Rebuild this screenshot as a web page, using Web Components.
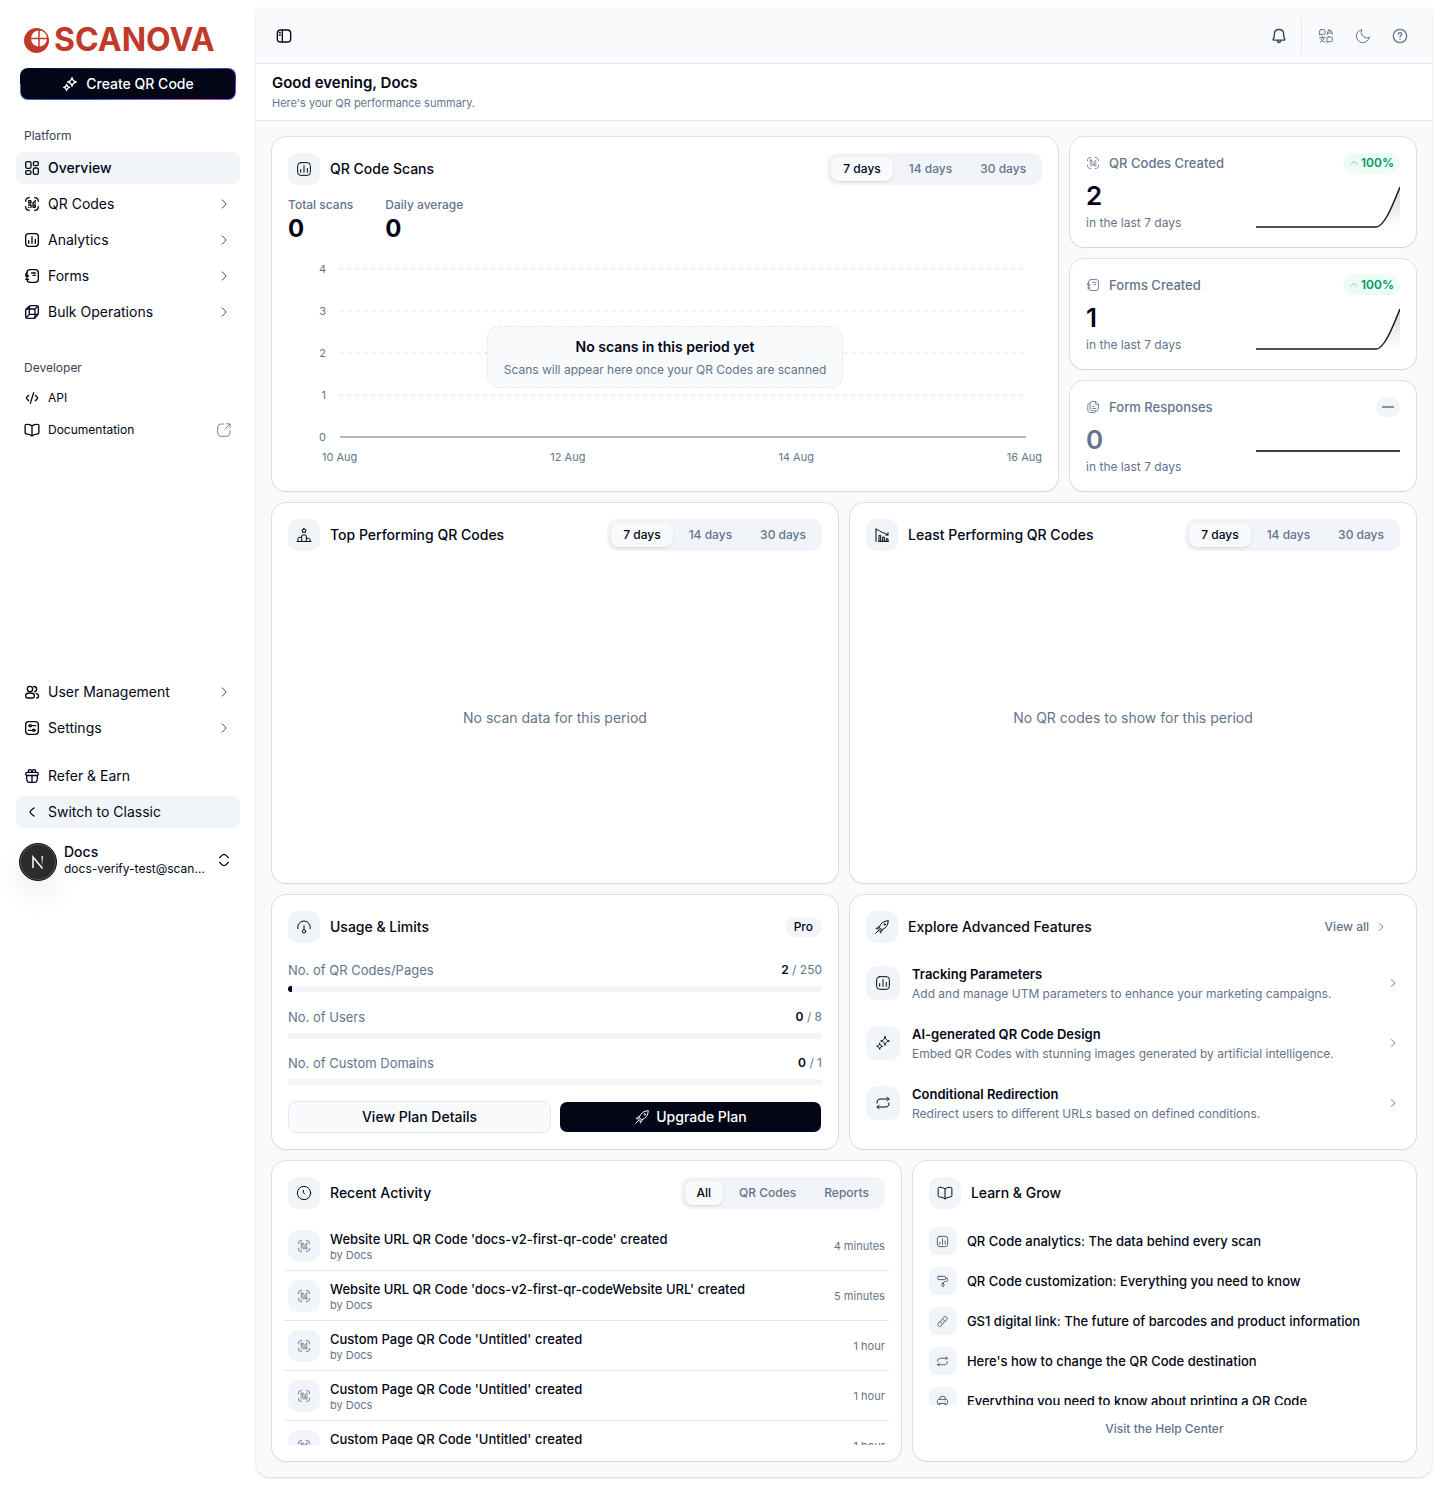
<!DOCTYPE html>
<html lang="en">
<head>
<meta charset="utf-8">
<meta name="viewport" content="width=device-width, initial-scale=1">
<title>Scanova – Overview</title>
<style>
  :root {
    --ink: #020617;
    --muted: #64748b;
    --soft: #f1f5f9;
    --surface: #f8fafc;
    --line: #e2e8f0;
  }
  body {
    margin: 0;
    background: #fff;
    color: var(--ink);
    font: 14px/20px Inter, "Liberation Sans", sans-serif;
  }
</style>
</head>
<body>
<app-shell>
  <app-sidebar slot="sidebar"></app-sidebar>
  <top-bar></top-bar>
  <page-greeting heading="Good evening, Docs">Here's your QR performance summary.</page-greeting>
  <dash-grid>
    <dash-row layout="wide">
      <dash-card icon="chart" heading="QR Code Scans" style="--body-gap:12px">
        <seg-tabs slot="action" options="7 days,14 days,30 days"></seg-tabs>
        <scan-chart></scan-chart>
      </dash-card>
      <stat-stack>
        <stat-card icon="qr" label="QR Codes Created" value="2" delta="100%"></stat-card>
        <stat-card icon="forms" label="Forms Created" value="1" delta="100%"></stat-card>
        <stat-card icon="files" label="Form Responses" value="0"></stat-card>
      </stat-stack>
    </dash-row>
    <dash-row layout="half">
      <dash-card icon="podium" heading="Top Performing QR Codes">
        <seg-tabs slot="action" options="7 days,14 days,30 days"></seg-tabs>
        <empty-note>No scan data for this period</empty-note>
      </dash-card>
      <dash-card icon="decline" heading="Least Performing QR Codes">
        <seg-tabs slot="action" options="7 days,14 days,30 days"></seg-tabs>
        <empty-note>No QR codes to show for this period</empty-note>
      </dash-card>
    </dash-row>
    <dash-row layout="half">
      <dash-card icon="gauge" heading="Usage &amp; Limits">
        <plan-badge slot="action">Pro</plan-badge>
        <usage-panel>
          <usage-row label="No. of QR Codes/Pages" used="2" limit="250"></usage-row>
          <usage-row label="No. of Users" used="0" limit="8"></usage-row>
          <usage-row label="No. of Custom Domains" used="0" limit="1"></usage-row>
        </usage-panel>
      </dash-card>
      <dash-card icon="rocket" heading="Explore Advanced Features" style="--body-gap:10px">
        <view-all slot="action">View all</view-all>
        <feature-item icon="chart" heading="Tracking Parameters">Add and manage UTM parameters to enhance your marketing campaigns.</feature-item>
        <feature-item icon="sparkles" heading="AI-generated QR Code Design">Embed QR Codes with stunning images generated by artificial intelligence.</feature-item>
        <feature-item icon="repeat" heading="Conditional Redirection">Redirect users to different URLs based on defined conditions.</feature-item>
      </dash-card>
    </dash-row>
    <dash-row layout="feed">
      <dash-card icon="clock" heading="Recent Activity" style="--body-gap:12px">
        <seg-tabs slot="action" options="All,QR Codes,Reports"></seg-tabs>
        <clip-list style="--list-height:224px; --bleed:4px">
          <activity-item by="by Docs" when="4 minutes">Website URL QR Code 'docs-v2-first-qr-code' created</activity-item>
          <activity-item by="by Docs" when="5 minutes">Website URL QR Code 'docs-v2-first-qr-codeWebsite URL' created</activity-item>
          <activity-item by="by Docs" when="1 hour">Custom Page QR Code 'Untitled' created</activity-item>
          <activity-item by="by Docs" when="1 hour">Custom Page QR Code 'Untitled' created</activity-item>
          <activity-item by="by Docs" when="1 hour">Custom Page QR Code 'Untitled' created</activity-item>
        </clip-list>
      </dash-card>
      <dash-card icon="book" heading="Learn &amp; Grow" style="--body-gap:12px">
        <clip-list style="--list-height:184px">
          <learn-item icon="chart">QR Code analytics: The data behind every scan</learn-item>
          <learn-item icon="roller">QR Code customization: Everything you need to know</learn-item>
          <learn-item icon="link">GS1 digital link: The future of barcodes and product information</learn-item>
          <learn-item icon="repeat">Here's how to change the QR Code destination</learn-item>
          <learn-item icon="printer">Everything you need to know about printing a QR Code</learn-item>
        </clip-list>
        <help-link>Visit the Help Center</help-link>
      </dash-card>
    </dash-row>
  </dash-grid>
</app-shell>

<script>
const ICONS = {
  grid: '<rect x="2.5" y="2.5" width="8" height="10" rx="2.5"/><rect x="14" y="2.5" width="7.500" height="6" rx="2.500"/><rect x="2.500" y="16" width="8" height="5.500" rx="2.500"/><rect x="14" y="12" width="7.500" height="9.500" rx="2.500"/>',
  qr: '<path d="M2.5 8C2.5 4.500 4 2.600 8 2.500M16 2.500c4 .1 5.500 2 5.500 5.500M21.500 16c0 3.500-1.500 5.400-5.500 5.500M8 21.500C4 21.400 2.500 19.500 2.500 16"/><rect x="7" y="7" width="3.500" height="3.500" rx=".8"/><rect x="13.500" y="13.500" width="3.500" height="3.500" rx=".8"/><path d="M17.300 6.800L13.500 10.500v1.500M16.800 10.500h.5M6.800 13.500h3.700v3.700M7 17.200h.4"/>',
  chart: '<rect x="2.500" y="2.500" width="19" height="19" rx="4.500"/><path d="M7 17v-4M12 17V7M17 17v-6"/>',
  forms: '<rect x="4.500" y="2.500" width="17" height="19" rx="4.500"/><path d="M4.500 7.500L2.500 9.500M2.500 12H7M4.500 12l-2-2.500M2.500 17H7M11.500 7.500H17M13.500 11H17"/>',
  cube: '<path d="M2.500 10c0-1.500.6-2.500 1.600-3.300l3.500-3C8.500 3 9.300 2.500 10.700 2.500H18c2.500 0 3.500 1 3.500 3.500v7.300c0 1.400-.4 2.200-1.200 3.100l-3 3.500c-.8 1-1.800 1.600-3.300 1.600H6c-2.500 0-3.500-1-3.500-3.500z"/><path d="M3.500 7.500H14c1.800 0 2.500.7 2.500 2.500v10.500M16 8l5-4.800M8 3.500v12L3.300 20.500M8 15.500h12.500"/>',
  code: '<path d="M17 8l1.800 1.800c1 .9 1.500 1.500 1.500 2.200s-.5 1.300-1.500 2.200L17 16M7 8L5.200 9.800C4.200 10.700 3.700 11.300 3.700 12s.5 1.300 1.500 2.200L7 16M14.500 4l-5 16"/>',
  book: '<path d="M12 5.500v15.500M5.300 3.600C8.500 4 10.800 4.800 12 5.800c1.200-1 3.500-1.800 6.700-2.200 1.600-.2 2.400-.3 3 .3.600.5.600 1.300.6 3v7.600c0 1.500 0 2.300-.4 2.800-.4.500-1.300.6-3 .9-3.100.4-5.300 1.300-6.900 2.800-1.600-1.500-3.800-2.400-6.900-2.800-1.700-.3-2.600-.4-3-.9-.4-.5-.4-1.300-.4-2.800V6.900c0-1.700 0-2.500.6-3 .600-.6 1.400-.5 3-.3z"/>',
  external: '<path d="M11 3H8.500C4.500 3 2.500 5 2.500 9v6.500c0 4 2 6 6 6H15c4 0 6-2 6-6V13M21 3.300L13.500 10.500M15.500 2.800c3 0 5-.2 5.500.3.500.5.300 2.500.2 5.400"/>',
  users: '<circle cx="9" cy="7.500" r="4"/><path d="M2.500 17.500c0-3 2-4 6.500-4s6.500 1 6.500 4-1 3.500-3 3.500h-7c-2 0-3-.5-3-3.500zM14.500 3.700c3 0 4.500 1.500 4.500 3.800 0 2.200-1.500 3.700-3.300 4M18 14c2.500.5 3.800 1.700 3.800 4 0 2-.8 3-2.800 3"/>',
  settings: '<rect x="2.500" y="2.500" width="19" height="19" rx="4.500"/><path d="M7 8.500h1M12 8.500h5.500M6.500 15.500H12M16.500 15.500h1"/><circle cx="9.500" cy="8.500" r="1.600"/><circle cx="14.500" cy="15.500" r="1.600"/>',
  gift: '<path d="M4 11v4c0 3.500.5 6.500 4 6.500h8c3.500 0 4-3 4-6.500v-4M2.500 9c0-1.500.7-2.500 2.500-2.500h14c1.800 0 2.500 1 2.500 2.500s-.7 2.300-2.500 2.300H5C3.200 11.300 2.500 10.500 2.500 9zM12 11v10.500M6.500 4.500c0-1.300 1-2 2-2 2 0 3.500 2 3.500 4 0-2 1.500-4 3.500-4 1 0 2 .7 2 2 0 1-.5 1.700-1 2M6.500 4.500c0 1 .5 1.700 1 2"/>',
  chevron: '<path d="M9 6s6 4.400 6 6-6 6-6 6"/>',
  back: '<path d="M15 6s-6 4.400-6 6 6 6 6 6"/>',
  up: '<path d="M4 15s6-6 8-6 8 6 8 6"/>',
  unfold: '<path d="M5.500 8.500s4.500-5 6.500-5 6.500 5 6.500 5M5.500 15.500s4.500 5 6.500 5 6.500-5 6.500-5"/>',
  panel: '<rect x="2" y="3" width="20" height="18" rx="5"/><path d="M9.500 3v18M5 7h1.500M5 10.500h1.500"/>',
  bell: '<path d="M4 18.200c-1-.3-1.200-1.200-.5-2C4.800 14.700 5 13.500 5 11V9.500C5 5 8 2.200 12 2.200S19 5 19 9.500V11c0 2.500.2 3.700 1.500 5.200.7.800.5 1.700-.5 2zM9.500 18.500c0 2 1 3.200 2.500 3.200s2.500-1.200 2.500-3.200"/>',
  translate: '<path d="M4.500 2.500h4c1.500 0 2 .5 2 2v3c0 1.500-.5 2-2 2H6l-3.500 1v-6c0-1.500.5-2 2-2zM2.500 14.500h8M6.500 12.500v2M9 14.500c-.5 3-2.500 5-5.500 6.500M4.500 17c1 2 3 3.500 6 4M13.500 10l2.500-7.500h1l2.500 3M14.500 7.500h4M17.500 4c2.500 0 4 1.500 4 4.500M19.500 7l2 1.700M15.500 13.500h4c1.500 0 2 .5 2 2v3c0 1.500-.5 2-2 2h-3l-3 1v-6c0-1.500.5-2 2-2z"/>',
  moon: '<path d="M21.500 14.100c-1.200.6-2.500.9-3.900.9A9.400 9.400 0 0 1 9.900 2.500 9.800 9.800 0 1 0 21.500 14.100z"/>',
  help: '<circle cx="12" cy="12" r="10"/><path d="M9.500 9.500C9.500 8 10.600 7 12 7s2.500 1 2.500 2.300c0 1.700-2.500 2-2.500 4.200M12 17v.1"/>',
  sparkles: '<path d="M15 2.500c.7 4 2.500 5.800 6.500 6.500-4 .7-5.800 2.500-6.500 6.500-.7-4-2.500-5.800-6.500-6.500 4-.7 5.800-2.500 6.500-6.500zM7 12.500c.5 3 1.700 4 4.500 4.500-2.800.5-4 1.700-4.500 4.500-.5-2.800-1.700-4-4.500-4.500 2.800-.5 4-1.500 4.500-4.500z"/>',
  files: '<path d="M7 6c0-2.500 1-3.500 3.500-3.500h4.700c1 0 1.500.2 2.200.9l3 3c.7.700.9 1.200.9 2.200V15c0 2.500-1 3.500-3.500 3.500h-7.300C8 18.500 7 17.500 7 15zM16 2.800V6c0 1.500.5 2 2 2h3M7 5.500C4 5.500 3 7 3 9.500v7c0 3.500 1.500 5 5 5h5.500c2.500 0 3.500-1 3.500-3M11 11h3M11 14.500h6"/>',
  podium: '<path d="M12 2l1.200 2 2.300.5-1.600 1.700.3 2.300-2.200-1-2.200 1 .3-2.300-1.600-1.700 2.300-.5zM8.500 21.500v-8c0-1 .5-1.500 1.500-1.500h4c1 0 1.500.5 1.500 1.500v8M8.500 15.500H5c-1.500 0-2 .5-2 2v4M15.500 17H19c1.500 0 2 .5 2 2v2.500M1.500 21.700h21"/>',
  decline: '<path d="M3 2.500v19M7.500 21.500v-9h2.500v9M13 21.500v-6.500h2.500v6.500M18.500 21.500v-4H21v4M7 21.500h14.500M4 4c4 0 5.500 3.500 9 4.500s4.500.5 8 3.500M21 8.500V12h-3.500"/>',
  gauge: '<path d="M2.700 14.500A9.500 9.500 0 0 1 12 3a9.500 9.500 0 0 1 9.300 11.500"/><path d="M12 10v6"/><circle cx="12" cy="18.500" r="2.500"/>',
  rocket: '<path d="M8 12c2-5.500 6-9 13.500-9.500C21 10 17.500 14 12 16zM8 12c-1.500-.5-3 0-5 2.500L8 15M12 16c.5 1.500 0 3-2.500 5L9 16.500M7 17l-4.500 4.500"/><circle cx="16" cy="8" r="1"/>',
  repeat: '<path d="M3 12c0-4.500 1.500-6 6-6h12M18 3.500c1.500 1 3 2 3 2.500s-1.500 1.500-3 2.500M21 12c0 4.500-1.500 6-6 6H3M6 15.500c-1.500 1-3 2-3 2.500s1.500 1.500 3 2.500"/>',
  clock: '<circle cx="12" cy="12" r="10"/><path d="M11 8v3.500l2 2"/>',
  roller: '<rect x="3" y="2.500" width="15" height="6" rx="2"/><path d="M18 5.500c3 0 3.500.5 3.500 3s-.5 3-4 3.500c-3 .4-4.500.8-4.500 3M11.800 15.500h2.400l.5 4c.1 1.200-.5 2-1.700 2s-1.800-.8-1.700-2z"/>',
  link: '<path d="M14 8.500c2 1.500 1.500 4 .2 5.500l-4 5.500c-1.300 1.800-3.500 2.300-5.200 1-1.700-1.200-1.900-3.500-.6-5.300l2.600-3.500M10 15.500c-2-1.500-1.500-4-.2-5.500l4-5.500c1.300-1.800 3.500-2.300 5.200-1 1.700 1.200 1.900 3.500.6 5.300L17 12.300"/>',
  printer: '<path d="M7 17.500c-3.500 0-4.500-1-4.500-5S3.500 8 7 8h10c3.500 0 4.500.5 4.500 4.500s-1 5-4.500 5M6.500 8C6.500 4 7.500 2.500 12 2.500S17.500 4 17.500 8M7 15.500h10l.7 3.500c.3 1.800-.3 2.500-2.200 2.500h-7c-1.900 0-2.500-.7-2.200-2.500zM17 11.500h.1"/>'
};

const BASE = ':host,*{box-sizing:border-box}button{font:inherit;color:inherit;border:0;background:none;padding:0;margin:0}a{color:inherit;text-decoration:none}';

/* Registers an element whose shadow root is filled from a style sheet and a render function. */
function component(name, css, render) {
  customElements.define(name, class extends HTMLElement {
    constructor() { super(); this.attachShadow({ mode: 'open' }); }
    connectedCallback() {
      const get = (key, fallback = '') => this.getAttribute(key) ?? fallback;
      const has = key => this.hasAttribute(key);
      const template = document.createElement('template');
      template.innerHTML = `<style>${BASE}${css}</style>${render(get, has)}`;
      this.shadowRoot.replaceChildren(template.content.cloneNode(true));
    }
  });
}

component('ui-icon', ':host{display:inline-flex;flex:none}svg{display:block}', get => `
  <svg width="${get('size', 16)}" height="${get('size', 16)}" viewBox="0 0 24 24" fill="none" stroke="currentColor"
    stroke-width="${get('weight', '1.5')}" stroke-linecap="round" stroke-linejoin="round" aria-hidden="true">${ICONS[get('name')] || ''}</svg>`);

component('app-shell', `
  :host{display:flex;align-items:flex-start}
  main{flex:1;min-width:0;margin:8px 8px 8px 0;background:var(--surface);border-radius:0 0 14px 14px;
    box-shadow:0 1px 3px rgba(2,6,23,.12),0 1px 2px rgba(2,6,23,.06)}
  ::slotted(app-sidebar){flex:none}`, () => '<slot name="sidebar"></slot><main><slot></slot></main>');

component('brand-logo', `
  :host{display:flex;align-items:center;gap:5px;color:#c0392b;font:700 32px/32px Inter,"Liberation Sans",sans-serif}
  svg{display:block}`, () => `
  <svg width="25" height="25" viewBox="0 0 25 25" aria-hidden="true">
    <circle cx="12.500" cy="12.500" r="12.500" fill="currentColor"/><circle cx="15" cy="10.500" r="8" fill="#fff"/>
    <path d="M15 2v17M6.500 10.500h17" stroke="currentColor" stroke-width="1.500"/></svg><span>SCANOVA</span>`);

component('nav-item', `
  :host{display:block}
  a{display:flex;align-items:center;gap:8px;height:32px;padding:0 8px;border-radius:8px}
  :host([active]) a{background:var(--soft)}
  :host([current]) a{font-weight:500}
  :host([small]) a{height:28px;font-size:12px}
  span{flex:1}
  .tail{color:#334155}`, (get, has) => `
  <a href="#"><ui-icon name="${get('icon')}" weight="2"></ui-icon><span><slot></slot></span>
  ${has('more') ? '<ui-icon class="tail" name="chevron"></ui-icon>' : ''}
  ${has('external') ? '<ui-icon class="tail" name="external" weight="1"></ui-icon>' : ''}</a>`);

component('nav-group', `
  :host{display:flex;flex-direction:column;gap:4px;padding:8px 16px}
  h2{margin:0 8px -4px;font:400 12px/32px Inter,sans-serif;color:#3b4054}`, get => `
  ${get('label') ? `<h2>${get('label')}</h2>` : ''}<slot></slot>`);

component('create-button', `
  :host{display:block;padding:0 20px}
  button{display:flex;width:100%;height:32px;align-items:center;justify-content:center;gap:8px;color:#fff;font-weight:500;
    border:1px solid transparent;border-radius:8px;
    background:linear-gradient(#020617,#020617) padding-box,
      linear-gradient(90deg,#3b6ea8 0,#3b5ea8 30%,#7c6fd6 60%,#d0489a 85%,#7c3aed 100%) 0 100%/100% 16px no-repeat border-box,
      linear-gradient(90deg,#020617 0,#1e3a5f 40%,#3b6ea8 80%,#5b21b6 100%) border-box}`,
  () => '<button type="button"><ui-icon name="sparkles" weight="2"></ui-icon>Create QR Code</button>');

component('user-chip', `
  :host{display:block;padding:0 16px}
  button{display:flex;width:100%;height:48px;align-items:center;gap:8px;padding:0 8px 0 3px;text-align:left}
  .avatar{display:grid;place-items:center;width:38px;height:38px;border-radius:50%;background:#2b2b2b;
    border:1px solid #111;box-shadow:inset 0 0 0 1px #555,0 16px 32px -8px rgba(0,0,0,.2);margin:4px -1px 0 0}
  .who{flex:1;min-width:0}
  .who b,.who small{display:block;overflow:hidden;text-overflow:ellipsis;white-space:nowrap}
  .who b{font:500 14px/17px Inter,sans-serif}
  .who small{font:400 12px/17px Inter,sans-serif}`, () => `
  <button type="button"><span class="avatar"><svg width="14" height="14" viewBox="0 0 14 14" fill="none" aria-hidden="true">
    <defs><linearGradient id="fade" x1="0" y1="0" x2="0" y2="1"><stop stop-color="#fff"/><stop offset="1" stop-color="#fff" stop-opacity="0"/></linearGradient></defs>
    <path d="M2 13V2l9.500 11.500" stroke="#fff" stroke-width="1.500"/><rect x="10.500" y="1" width="1.500" height="10" fill="url(#fade)"/></svg></span>
  <span class="who"><b>Docs</b><small>docs-verify-test@scanova.io</small></span><ui-icon name="unfold" weight="2"></ui-icon></button>`);

component('app-sidebar', `
  :host{display:flex;flex-direction:column;width:256px;height:100vh;max-height:892px;padding-bottom:8px}
  brand-logo{padding:24px 24px 12px}
  create-button{margin-bottom:12px}
  .low{margin-top:auto}`, () => `
  <brand-logo></brand-logo>
  <create-button></create-button>
  <nav-group label="Platform">
    <nav-item icon="grid" active current>Overview</nav-item>
    <nav-item icon="qr" more>QR Codes</nav-item>
    <nav-item icon="chart" more>Analytics</nav-item>
    <nav-item icon="forms" more>Forms</nav-item>
    <nav-item icon="cube" more>Bulk Operations</nav-item>
  </nav-group>
  <nav-group label="Developer" style="padding-top:16px">
    <nav-item icon="code" small>API</nav-item>
    <nav-item icon="book" small external>Documentation</nav-item>
  </nav-group>
  <nav-group class="low">
    <nav-item icon="users" more>User Management</nav-item>
    <nav-item icon="settings" more>Settings</nav-item>
  </nav-group>
  <nav-group>
    <nav-item icon="gift">Refer &amp; Earn</nav-item>
    <nav-item icon="back" active>Switch to Classic</nav-item>
  </nav-group>
  <user-chip></user-chip>`);

component('top-bar', `
  :host{display:flex;align-items:center;height:56px;padding:0 24px 0 20px;border-bottom:1px solid var(--line);color:var(--muted)}
  button{display:flex}
  .toggle{color:var(--ink);margin-right:auto}
  .bell{color:#334155}
  hr{width:1px;height:38px;margin:0 16px 0 14px;border:0;background:var(--line)}
  .trio{display:flex;gap:21px}`, () => `
  <button class="toggle" type="button" aria-label="Toggle sidebar"><ui-icon name="panel" weight="2"></ui-icon></button>
  <button class="bell" type="button" aria-label="Notifications"><ui-icon name="bell" weight="2"></ui-icon></button>
  <hr>
  <div class="trio">
    <button type="button" aria-label="Language"><ui-icon name="translate"></ui-icon></button>
    <button type="button" aria-label="Theme"><ui-icon name="moon"></ui-icon></button>
    <button type="button" aria-label="Help"><ui-icon name="help" weight="2"></ui-icon></button>
  </div>`);

component('page-greeting', `
  :host{display:block;padding:8px 16px;background:#fff;border-bottom:1px solid var(--line)}
  h1{margin:0;font:600 15px/22px Inter,sans-serif}
  p{margin:0;font-size:11px;line-height:18px;color:var(--muted)}`, get => `<h1>${get('heading')}</h1><p><slot></slot></p>`);

component('dash-grid', ':host{display:flex;flex-direction:column;gap:12px;padding:16px}', () => '<slot></slot>');
component('dash-row', `
  :host{display:grid;gap:12px}
  :host([layout=wide]){grid-template-columns:minmax(0,25fr) minmax(0,11fr)}
  :host([layout=half]){grid-template-columns:repeat(2,minmax(0,1fr))}
  :host([layout=feed]){grid-template-columns:minmax(0,5fr) minmax(0,4fr)}`, () => '<slot></slot>');
component('stat-stack', ':host{display:flex;flex-direction:column;gap:12px}', () => '<slot></slot>');

const CARD = 'background:#fff;border-radius:14px;padding:16px;box-shadow:0 0 0 1px rgba(2,6,23,.1),0 1px 2px rgba(2,6,23,.06);';

component('dash-card', `
  :host{display:flex;flex-direction:column;${CARD}}
  header{display:flex;align-items:center;gap:10px;height:32px;margin-bottom:var(--body-gap,18px)}
  .tile{display:grid;place-items:center;width:32px;height:32px;border-radius:10px;background:var(--soft)}
  h2{flex:1;margin:0;font:500 14px/20px Inter,sans-serif}
  section{flex:1;display:flex;flex-direction:column}`, get => `
  <header><span class="tile"><ui-icon name="${get('icon')}"></ui-icon></span><h2>${get('heading').replace('&', '&amp;')}</h2><slot name="action"></slot></header>
  <section><slot></slot></section>`);

component('seg-tabs', `
  :host{display:flex;gap:4px;height:32px;padding:4px;border-radius:10px;background:var(--soft)}
  button{height:24px;padding:0 12px;border-radius:8px;font:500 12px/24px Inter,sans-serif;color:var(--muted)}
  button[aria-pressed=true]{background:var(--surface);color:var(--ink);box-shadow:0 1px 3px rgba(2,6,23,.12)}`, get =>
  get('options').split(',').map((text, i) => `<button type="button" aria-pressed="${i === 0}">${text}</button>`).join(''));

component('scan-chart', `
  :host{display:block}
  dl{display:flex;gap:32px;margin:0 0 4px}
  dt{font:500 12px/16px Inter,sans-serif;color:var(--muted)}
  dd{margin:0;font:700 24px/32px Inter,sans-serif}
  .chart{position:relative;padding-top:12px;font-size:11px;line-height:16px;color:var(--muted)}
  .plot{display:flex;gap:14px;padding-right:16px}
  .ticks{display:flex;flex-direction:column;justify-content:space-between;width:38px;height:184px;text-align:right}
  svg{display:block;flex:1;min-width:0;height:184px}
  .dates{display:flex;justify-content:space-between;margin:4px 0 0 34px}
  .overlay{position:absolute;inset:0;display:grid;place-items:center}
  .note{padding:8px 16px;text-align:center;background:rgba(248,250,252,.96);border:1px dashed var(--line);border-radius:12px;font-size:12px;line-height:18px}
  .note strong{display:block;margin-bottom:2px;font:600 14px/24px Inter,sans-serif;color:var(--ink)}`, () => `
  <dl><div><dt>Total scans</dt><dd>0</dd></div><div><dt>Daily average</dt><dd>0</dd></div></dl>
  <div class="chart">
    <div class="plot">
      <div class="ticks"><span>4</span><span>3</span><span>2</span><span>1</span><span>0</span></div>
      <svg width="100%" height="184" aria-hidden="true">
        <g stroke="#eceef2" stroke-width="2" stroke-dasharray="3 5">${[8, 50, 92, 134].map(y => `<line x1="0" x2="100%" y1="${y}" y2="${y}"/>`).join('')}</g>
        <line x1="0" x2="100%" y1="176" y2="176" stroke="#b4b6c2" stroke-width="2"/>
      </svg>
    </div>
    <div class="dates"><span>10 Aug</span><span>12 Aug</span><span>14 Aug</span><span>16 Aug</span></div>
    <div class="overlay"><div class="note"><strong>No scans in this period yet</strong>Scans will appear here once your QR Codes are scanned</div></div>
  </div>`);

component('stat-card', `
  :host{display:block;${CARD}color:var(--muted)}
  header{display:flex;align-items:center;gap:9px;height:20px}
  h3{flex:1;margin:0;font:500 13px/20px Inter,sans-serif}
  .delta{display:flex;align-items:center;gap:2px;height:20px;padding:0 6px;border-radius:10px;font:600 12px/20px Inter,sans-serif;background:var(--soft)}
  .delta.up{background:#ecfdf5;color:#059669}
  .delta ui-icon{opacity:.7}
  .dash{width:12px;height:2px;background:#8591a3}
  .flat{width:24px;justify-content:center}
  .body{display:flex;justify-content:space-between}
  .value{margin:7px 0 3px;font:600 26px/32px Inter,sans-serif}
  .value.on{color:var(--ink)}
  small{display:block;font-size:12px;line-height:16px}
  svg{display:block;margin-top:12px}`, get => {
  const delta = get('delta');
  return `
  <header><ui-icon name="${get('icon')}" size="14"></ui-icon><h3>${get('label')}</h3>
    ${delta ? `<span class="delta up"><ui-icon name="up" size="10"></ui-icon>${delta}</span>` : '<span class="delta flat"><span class="dash"></span></span>'}</header>
  <div class="body"><div><div class="value ${delta ? 'on' : ''}">${get('value')}</div><small>in the last 7 days</small></div>
  <svg width="144" height="44" viewBox="0 0 144 44" fill="none" aria-hidden="true">
    <defs><linearGradient id="area" x1="0" y1="0" x2="0" y2="1"><stop stop-color="#020617" stop-opacity=".16"/><stop offset="1" stop-color="#020617" stop-opacity="0"/></linearGradient></defs>
    ${delta ? '<path d="M120 42C128 42 136 22 144 2V42z" fill="url(#area)"/><path d="M0 42H120C128 42 136 22 144 2" stroke="#18181f" stroke-width="1.500"/>'
            : '<path d="M0 22H144" stroke="#3c3c44" stroke-width="2"/>'}
  </svg></div>`;
});

component('empty-note', `
  :host{flex:1;display:grid;place-items:center;min-height:298px;color:var(--muted)}`, () => '<span><slot></slot></span>');

component('plan-badge', `
  :host{display:block;height:20px;padding:0 9px;border-radius:10px;background:var(--soft);font:500 12px/20px Inter,sans-serif}`, () => '<slot></slot>');

component('usage-row', `
  :host{display:block;color:var(--muted)}
  .text{display:flex;justify-content:space-between;margin-bottom:7px;font-size:13px;line-height:18px}
  .count{font-size:12px}
  b{font-weight:600;color:var(--ink)}
  .bar{height:6px;border-radius:3px;background:var(--soft);overflow:hidden}
  .fill{height:100%;background:var(--ink)}`, get => `
  <div class="text"><span>${get('label')}</span><span class="count"><b>${get('used')}</b> / ${get('limit')}</span></div>
  <div class="bar" role="progressbar" aria-label="${get('label')}" aria-valuenow="${get('used')}" aria-valuemax="${get('limit')}"><div class="fill" style="width:${get('used') / get('limit') * 100}%"></div></div>`);

component('usage-panel', `
  :host{flex:1;display:flex;flex-direction:column;gap:16px}
  .rows{flex:1;display:flex;flex-direction:column;justify-content:space-between;min-height:124px}
  .actions{display:grid;grid-template-columns:1fr 1fr;gap:8px}
  button{display:flex;align-items:center;justify-content:center;gap:6px;height:32px;border:1px solid var(--line);border-radius:8px;background:var(--surface);font-weight:500}
  .primary{border-color:transparent;background:#020617 padding-box;color:#fff}`, () => `
  <div class="rows"><slot></slot></div>
  <div class="actions"><button type="button">View Plan Details</button><button class="primary" type="button"><ui-icon name="rocket"></ui-icon>Upgrade Plan</button></div>`);

component('view-all', `
  :host{display:block;padding-right:12px;color:var(--muted)}
  a{display:flex;align-items:center;gap:5px;font:500 12px/20px Inter,sans-serif}`,
  () => '<a href="#"><slot></slot><ui-icon name="chevron" size="14"></ui-icon></a>');

component('feature-item', `
  :host{flex:1;display:flex;align-items:center}
  a{flex:1;display:flex;align-items:center;gap:12px}
  .tile{display:grid;place-items:center;width:34px;height:34px;border-radius:10px;background:var(--soft)}
  .text{flex:1;font-size:12px;line-height:18px;color:var(--muted)}
  strong{display:block;margin-bottom:1px;font:600 13px/20px Inter,sans-serif;color:var(--ink)}
  .go{color:var(--muted)}`, get => `
  <a href="#"><span class="tile"><ui-icon name="${get('icon')}" size="16"></ui-icon></span>
  <span class="text"><strong>${get('heading')}</strong><slot></slot></span><ui-icon class="go" name="chevron" size="14"></ui-icon></a>`);

component('clip-list', `
  :host{display:block;height:var(--list-height);overflow:hidden;margin:0 calc(var(--bleed,0px) * -1)}`, () => '<slot></slot>');

component('activity-item', `
  :host{display:flex;align-items:center;gap:10px;height:50px;padding:0 4px;border-bottom:1px solid var(--line);font-size:11px;line-height:14px;color:var(--muted)}
  .tile{display:grid;place-items:center;width:32px;height:32px;border-radius:10px;background:var(--soft);color:#8290a5}
  .text{flex:1;min-width:0}
  strong{display:block;font:500 13px/18px Inter,sans-serif;color:var(--ink)}`, get => `
  <span class="tile"><ui-icon name="qr" size="14" weight="2"></ui-icon></span>
  <span class="text"><strong><slot></slot></strong>${get('by')}</span><time>${get('when')}</time>`);

component('learn-item', `
  :host{display:block}
  a{display:flex;align-items:center;gap:10px;height:40px;font:500 13px/20px Inter,sans-serif}
  .tile{display:grid;place-items:center;width:28px;height:28px;border-radius:8px;background:var(--soft);color:#334155}`, get => `
  <a href="#"><span class="tile"><ui-icon name="${get('icon')}" size="13"></ui-icon></span><slot></slot></a>`);

component('help-link', `
  :host{display:block;margin-top:8px;text-align:center;color:var(--muted);font:500 12px/32px Inter,sans-serif}`, () => '<a href="#"><slot></slot></a>');
</script>
</body>
</html>
